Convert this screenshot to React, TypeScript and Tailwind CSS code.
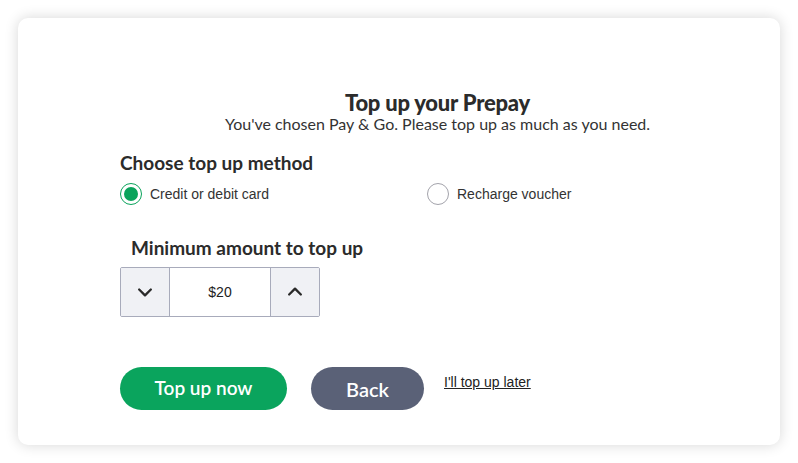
import { useState } from 'react';

// 위/아래 화살표
function ChevronDown() {
  return (
    <svg className="w-[20px] h-[20px]" fill="none" stroke="#2a2a2a" strokeWidth="2.8" strokeLinecap="round" strokeLinejoin="round" viewBox="0 0 24 24">
      <path d="M5 9l7 7 7-7" />
    </svg>
  );
}

function ChevronUp() {
  return (
    <svg className="w-[20px] h-[20px]" fill="none" stroke="#2a2a2a" strokeWidth="2.8" strokeLinecap="round" strokeLinejoin="round" viewBox="0 0 24 24">
      <path d="M5 15l7-7 7 7" />
    </svg>
  );
}

function Radio({ checked }: { checked: boolean }) {
  return (
    <span
      className={`w-[22px] h-[22px] rounded-full flex items-center justify-center flex-shrink-0 border-[1.5px] ${
        checked ? 'border-[#0aa35b]' : 'border-[#a3a3ab]'
      }`}
    >
      {checked && <span className="w-[14px] h-[14px] rounded-full bg-[#0aa35b]" />}
    </span>
  );
}

export default function App() {
  const [method, setMethod] = useState<'card' | 'voucher'>('card');
  const [amount, setAmount] = useState(20);

  return (
    <div className="w-[798px] h-[463px] bg-white p-[18px] font-['Lato',sans-serif] text-[#2b2b2b]">
      <div className="h-[427px] w-[762px] rounded-[10px] bg-white shadow-[0_0_14px_rgba(0,0,0,0.16)] pt-[73px] pl-[102px]">
        <div className="w-[635px] flex flex-col">
          {/* 제목 */}
          <h1 className="text-center text-[22px] leading-[24px] font-black tracking-[-0.01em] text-[#2b2b2b]">
            Top up your Prepay
          </h1>
          <p className="text-center text-[16px] leading-[18px] text-[#333]">
            You've chosen Pay &amp; Go. Please top up as much as you need.
          </p>

          {/* 충전 방법 */}
          <h2 className="mt-[19px] text-[19px] leading-[22px] font-bold">Choose top up method</h2>
          <div className="mt-[9px] flex font-['Liberation_Sans',sans-serif] text-[14px] text-[#333]">
            <label className="w-[307px] flex items-center gap-[8px] cursor-pointer" onClick={() => setMethod('card')}>
              <Radio checked={method === 'card'} />
              <span>Credit or debit card</span>
            </label>
            <label className="flex items-center gap-[8px] cursor-pointer" onClick={() => setMethod('voucher')}>
              <Radio checked={method === 'voucher'} />
              <span>Recharge voucher</span>
            </label>
          </div>

          {/* 최소 금액 */}
          <h2 className="mt-[32px] ml-[11px] text-[19px] leading-[22px] font-bold">Minimum amount to top up</h2>
          <div className="mt-[8px] w-[200px] h-[50px] flex border border-[#a8abbb] rounded-[2px] overflow-hidden">
            <button
              className="w-[49px] bg-[#f0f1f5] flex items-center justify-center border-r border-[#a8abbb]"
              onClick={() => setAmount((a) => Math.max(20, a - 10))}
            >
              <ChevronDown />
            </button>
            <div className="flex-1 flex items-center justify-center font-['Liberation_Sans',sans-serif] text-[14px] text-[#222]">
              ${amount}
            </div>
            <button
              className="w-[49px] bg-[#f0f1f5] flex items-center justify-center border-l border-[#a8abbb]"
              onClick={() => setAmount((a) => a + 10)}
            >
              <ChevronUp />
            </button>
          </div>

          {/* 버튼 */}
          <div className="mt-[50px] flex items-start">
            <button className="w-[167px] h-[43px] rounded-full bg-[#0aa45d] text-white text-[19px] font-semibold">
              Top up now
            </button>
            <button className="ml-[24px] w-[113px] h-[43px] rounded-full bg-[#5a6177] text-white text-[20px] font-semibold">
              Back
            </button>
            <a className="ml-[20px] mt-[5px] font-['Liberation_Sans',sans-serif] text-[14px] text-[#222] underline cursor-pointer">
              I'll top up later
            </a>
          </div>
        </div>
      </div>
    </div>
  );
}
